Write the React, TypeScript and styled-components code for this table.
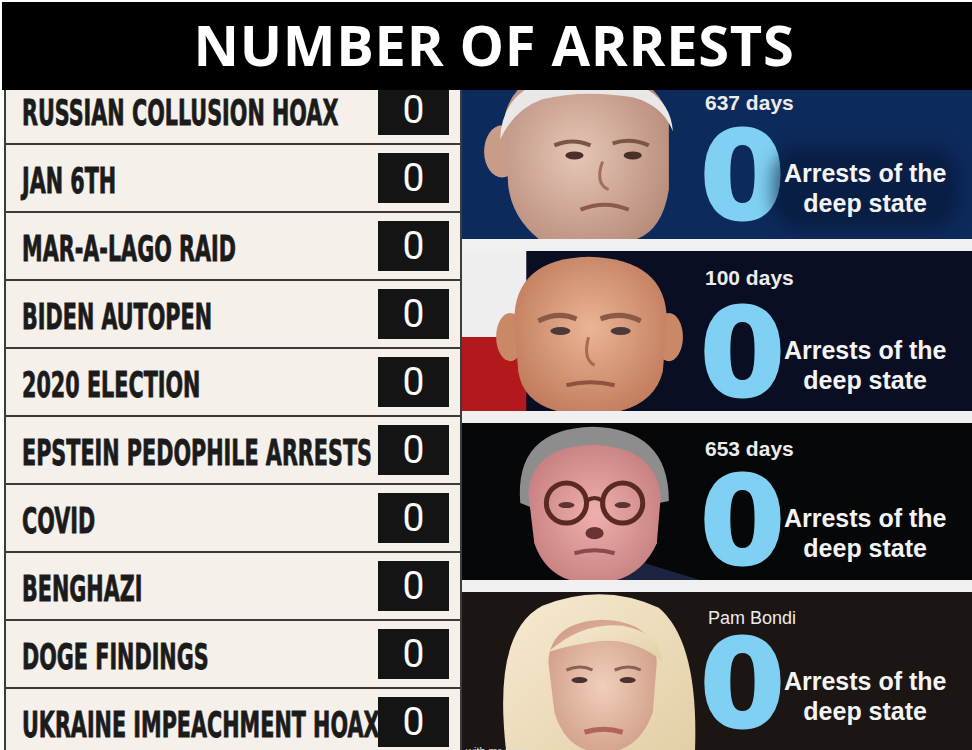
import React from 'react';
import styled, {createGlobalStyle} from 'styled-components';

const GlobalStyle = createGlobalStyle`
    html, body {
        margin: 0;
        padding: 0;
        background: #ffffff;
    }
    body {
        font-family: "Liberation Sans", Arial, sans-serif;
    }
`;

const categories = [
    'RUSSIAN COLLUSION HOAX',
    'JAN 6TH',
    'MAR-A-LAGO RAID',
    'BIDEN AUTOPEN',
    '2020 ELECTION',
    'EPSTEIN PEDOPHILE ARRESTS',
    'COVID',
    'BENGHAZI',
    'DOGE FINDINGS',
    'UKRAINE IMPEACHMENT HOAX',
];

type PortraitKind = 'grey' | 'bald' | 'glasses' | 'blonde';

type PanelData = {
    kind: PortraitKind
    bg: string
    label: string
    small?: boolean
    top: number
    gap: number
    height: number
    shade?: boolean
}

const panels: PanelData[] = [
    {kind: 'grey', bg: '#0d2a5c', label: '637 days', top: 1, gap: 13, height: 149, shade: true},
    {kind: 'bald', bg: '#0a0e22', label: '100 days', top: 15, gap: 15, height: 160},
    {kind: 'glasses', bg: '#060708', label: '653 days', top: 14, gap: 12, height: 157},
    {kind: 'blonde', bg: '#1b1613', label: 'Pam Bondi', small: true, top: 15, gap: 7, height: 159},
];

const Portrait = ({kind}: { kind: PortraitKind }) => {
    if (kind === 'grey') {
        return (
            <svg viewBox="0 0 238 150" preserveAspectRatio="xMidYMid slice" width="100%" height="100%">
                <defs>
                    <radialGradient id="skin1" cx="0.45" cy="0.5" r="0.6">
                        <stop offset="0" stopColor="#e6c6b6"/>
                        <stop offset="1" stopColor="#b98d7c"/>
                    </radialGradient>
                </defs>
                <ellipse cx="40" cy="62" rx="18" ry="26" fill="#c99c88"/>
                <path d="M42 30 Q50 -20 120 -20 Q195 -20 206 30 L206 100 Q198 150 160 152 L80 152 Q50 130 46 96 Z"
                      fill="url(#skin1)"/>
                <path d="M38 50 Q40 -12 120 -14 Q206 -12 210 42 Q200 16 170 8 Q120 0 80 10 Q52 20 38 50 Z"
                      fill="#e9e8e6"/>
                <path d="M92 56 Q110 48 128 56" stroke="#7a5548" strokeWidth="4" fill="none"/>
                <path d="M150 54 Q168 48 186 56" stroke="#7a5548" strokeWidth="4" fill="none"/>
                <ellipse cx="112" cy="66" rx="9" ry="4" fill="#4a3028"/>
                <ellipse cx="170" cy="66" rx="9" ry="4" fill="#4a3028"/>
                <path d="M140 72 Q132 94 146 100" stroke="#a0705f" strokeWidth="3" fill="none"/>
                <path d="M118 120 Q142 110 166 120" stroke="#8a5a4c" strokeWidth="4" fill="none"/>
            </svg>
        );
    }
    if (kind === 'bald') {
        return (
            <svg viewBox="0 0 238 160" preserveAspectRatio="xMidYMid slice" width="100%" height="100%">
                <defs>
                    <radialGradient id="skin2" cx="0.5" cy="0.45" r="0.6">
                        <stop offset="0" stopColor="#eab596"/>
                        <stop offset="1" stopColor="#c07a5a"/>
                    </radialGradient>
                </defs>
                <rect x="0" y="0" width="238" height="160" fill="#0a0e22"/>
                <rect x="0" y="0" width="64" height="86" fill="#eeeeee"/>
                <rect x="0" y="86" width="64" height="74" fill="#b3181c"/>
                <ellipse cx="48" cy="86" rx="14" ry="24" fill="#c98866"/>
                <ellipse cx="206" cy="86" rx="14" ry="24" fill="#c98866"/>
                <path d="M52 70 Q52 8 126 6 Q204 8 204 70 L200 120 Q190 162 126 164 Q62 162 56 120 Z"
                      fill="url(#skin2)"/>
                <path d="M76 70 Q96 60 114 68" stroke="#8a5a44" strokeWidth="5" fill="none"/>
                <path d="M138 68 Q158 60 178 70" stroke="#8a5a44" strokeWidth="5" fill="none"/>
                <ellipse cx="98" cy="80" rx="10" ry="4" fill="#4c3a38"/>
                <ellipse cx="158" cy="80" rx="10" ry="4" fill="#4c3a38"/>
                <path d="M126 86 Q120 108 132 114" stroke="#a86a50" strokeWidth="3" fill="none"/>
                <path d="M104 134 Q128 128 152 134" stroke="#93503e" strokeWidth="4" fill="none"/>
            </svg>
        );
    }
    if (kind === 'glasses') {
        return (
            <svg viewBox="0 0 238 157" preserveAspectRatio="xMidYMid slice" width="100%" height="100%">
                <defs>
                    <radialGradient id="skin3" cx="0.5" cy="0.5" r="0.6">
                        <stop offset="0" stopColor="#eeb0ae"/>
                        <stop offset="1" stopColor="#c47c7c"/>
                    </radialGradient>
                </defs>
                <path d="M150 130 L238 157 L150 157 Z" fill="#1c2440"/>
                <path d="M58 80 Q52 6 130 4 Q206 6 206 78 L196 80 Q190 30 130 26 Q74 30 68 84 Z" fill="#8d8d8d"/>
                <path d="M66 70 Q70 24 130 22 Q192 24 198 72 L194 120 Q176 160 130 160 Q86 160 72 120 Z"
                      fill="url(#skin3)"/>
                <circle cx="104" cy="80" r="20" fill="none" stroke="#5a2a20" strokeWidth="5"/>
                <circle cx="160" cy="80" r="20" fill="none" stroke="#5a2a20" strokeWidth="5"/>
                <path d="M124 78 Q132 72 140 78" stroke="#5a2a20" strokeWidth="4" fill="none"/>
                <ellipse cx="104" cy="82" rx="8" ry="3" fill="#5c3434"/>
                <ellipse cx="160" cy="82" rx="8" ry="3" fill="#5c3434"/>
                <ellipse cx="132" cy="110" rx="9" ry="6" fill="#6a3434"/>
                <path d="M112 130 Q132 124 152 130" stroke="#8c4a4a" strokeWidth="4" fill="none"/>
            </svg>
        );
    }
    return (
        <svg viewBox="0 0 238 159" preserveAspectRatio="xMidYMid slice" width="100%" height="100%">
            <defs>
                <radialGradient id="skin4" cx="0.5" cy="0.5" r="0.6">
                    <stop offset="0" stopColor="#f0cfba"/>
                    <stop offset="1" stopColor="#cf9c86"/>
                </radialGradient>
                <linearGradient id="hair4" x1="0" y1="0" x2="1" y2="1">
                    <stop offset="0" stopColor="#f6ead2"/>
                    <stop offset="1" stopColor="#e3cfa6"/>
                </linearGradient>
            </defs>
            <path d="M44 159 Q30 40 80 14 Q140 -10 196 16 Q236 50 232 159 Z" fill="url(#hair4)"/>
            <path d="M86 70 Q88 30 140 28 Q192 30 194 70 L190 120 Q176 160 140 160 Q104 160 92 120 Z"
                  fill="url(#skin4)"/>
            <path d="M86 60 Q120 30 160 34 Q196 40 200 70 Q170 44 130 50 Q104 54 86 60 Z" fill="url(#hair4)"/>
            <path d="M104 78 Q118 72 130 78" stroke="#8a6252" strokeWidth="3" fill="none"/>
            <path d="M152 78 Q166 72 178 78" stroke="#8a6252" strokeWidth="3" fill="none"/>
            <ellipse cx="117" cy="88" rx="8" ry="3" fill="#4a3230"/>
            <ellipse cx="165" cy="88" rx="8" ry="3" fill="#4a3230"/>
            <path d="M122 140 Q141 134 160 140" stroke="#b0645a" strokeWidth="5" fill="none"/>
        </svg>
    );
};

export default function App() {
    return (
        <>
            <GlobalStyle/>
            <Page>
                <Header>
                    <Title>NUMBER OF ARRESTS</Title>
                </Header>
                <Body>
                    <ListColumn>
                        <ListInner>
                            {categories.map((name) => (
                                <Row key={name}>
                                    <Label>{name}</Label>
                                    <CountBox>0</CountBox>
                                </Row>
                            ))}
                        </ListInner>
                    </ListColumn>
                    <PanelColumn>
                        {panels.map((p) => (
                            <Panel key={p.label} $bg={p.bg} $height={p.height}>
                                <Photo>
                                    <Portrait kind={p.kind}/>
                                </Photo>
                                <Info $top={p.top}>
                                    <Days $small={p.small} $gap={p.gap}>{p.label}</Days>
                                    <ZeroRow>
                                        <BigZero>0</BigZero>
                                        <Caption $shade={p.shade}>
                                            Arrests of the
                                            <br/>
                                            deep state
                                        </Caption>
                                    </ZeroRow>
                                </Info>
                                {p.kind === 'blonde' && <Credit>with mr.c.rr.tic</Credit>}
                            </Panel>
                        ))}
                    </PanelColumn>
                </Body>
            </Page>
        </>
    );
}

const Page = styled.div`
    width: 972px;
    height: 750px;
    overflow: hidden;
    background: #ffffff;
    display: flex;
    flex-direction: column;
    padding-top: 2px;
    box-sizing: border-box;
`;

const Header = styled.header`
    height: 88px;
    margin-left: 2px;
    background: #000;
    display: flex;
    align-items: center;
    justify-content: center;
    padding-left: 14px;
    flex-shrink: 0;
`;

const Title = styled.h1`
    margin: -4px 0 0;
    color: #fff;
    font-family: "Open Sans", "Liberation Sans", sans-serif;
    font-weight: 700;
    font-size: 56px;
    line-height: 1;
    letter-spacing: 0.7px;
`;

const Body = styled.div`
    flex: 1;
    display: flex;
    min-height: 0;
`;

const ListColumn = styled.section`
    width: 454px;
    margin-left: 4px;
    background: #f5f0ea;
    border-left: 2px solid #3c3c3c;
    border-right: 2px solid #3c3c3c;
    overflow: hidden;
    flex-shrink: 0;
`;

const ListInner = styled.div`
    display: flex;
    flex-direction: column;
    margin-top: -13px;
`;

const Row = styled.div`
    height: 68px;
    box-sizing: border-box;
    border-bottom: 2px solid #3a3a3a;
    display: flex;
    align-items: center;
    gap: 8px;
    padding: 0 11px 0 16px;
    flex-shrink: 0;
`;

const Label = styled.span`
    flex: 1;
    min-width: 0;
    font-family: "DejaVu Sans Condensed", "DejaVu Sans", sans-serif;
    font-weight: 700;
    font-size: 36px;
    line-height: 42px;
    color: #1b1b1b;
    white-space: nowrap;
    transform: scaleX(0.64);
    transform-origin: left center;
    -webkit-text-stroke: 0.8px #1b1b1b;
    margin-top: 5px;
`;

const CountBox = styled.div`
    width: 71px;
    height: 50px;
    background: #141414;
    color: #fafafa;
    display: flex;
    align-items: center;
    justify-content: center;
    font-family: "Roboto", "Liberation Sans", sans-serif;
    font-size: 39px;
    font-weight: 400;
    flex-shrink: 0;
`;

const PanelColumn = styled.section`
    flex: 1;
    display: flex;
    flex-direction: column;
    gap: 12px;
    background: #f0f0f0;
`;

const Panel = styled.div<{ $bg: string, $height: number }>`
    position: relative;
    height: ${p => p.$height}px;
    flex-shrink: 0;
    background: ${p => p.$bg};
    display: flex;
    overflow: hidden;
`;

const Photo = styled.div`
    width: 239px;
    flex-shrink: 0;
    height: 100%;
`;

const Info = styled.div<{ $top: number }>`
    flex: 1;
    padding: ${p => p.$top}px 0 0 4px;
    display: flex;
    flex-direction: column;
`;

const Days = styled.div<{ $small?: boolean, $gap: number }>`
    font-family: "Liberation Sans", Arial, sans-serif;
    font-size: ${p => p.$small ? 18 : 21}px;
    line-height: ${p => p.$small ? 22 : 24}px;
    font-weight: ${p => p.$small ? 400 : 700};
    color: #ececec;
    margin-bottom: ${p => p.$gap}px;
    padding-left: ${p => p.$small ? 3 : 0}px;
`;

const ZeroRow = styled.div`
    display: flex;
    align-items: flex-end;
`;

const BigZero = styled.div`
    font-family: "DejaVu Sans", sans-serif;
    font-weight: 700;
    font-size: 122px;
    line-height: 96px;
    height: 96px;
    color: #7fd0f2;
    -webkit-text-stroke: 3px #7fd0f2;
    margin-left: -5px;
    letter-spacing: -4px;
`;

const Caption = styled.div<{ $shade?: boolean }>`
    font-family: "Liberation Sans", Arial, sans-serif;
    font-weight: 700;
    font-size: 25px;
    line-height: 30px;
    color: #f4f4f4;
    text-align: center;
    margin: 0 0 6px 1px;
    padding: 0 2px;
    border-radius: 20px;
    background: ${p => p.$shade ? 'rgba(5, 20, 50, 0.55)' : 'transparent'};
    box-shadow: ${p => p.$shade ? '0 0 16px 10px rgba(5, 20, 50, 0.55)' : 'none'};
`;

const Credit = styled.span`
    position: absolute;
    left: 4px;
    bottom: -6px;
    font-size: 11px;
    color: #ddd;
    font-family: "Liberation Sans", Arial, sans-serif;
`;
